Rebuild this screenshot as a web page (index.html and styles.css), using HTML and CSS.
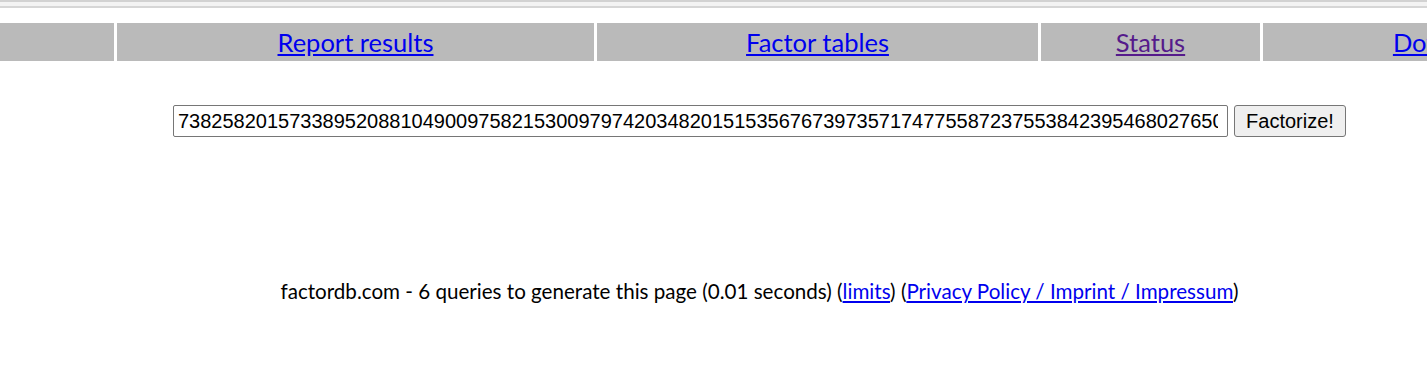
FILE: index.html
```html
<!DOCTYPE html>
<html lang="en">
    <head>
        <meta charset="UTF-8">
        <meta name="viewport" content="width=device-width, initial-scale=1.0">
        <title>factordb.com</title>
        <link rel="stylesheet" href="styles.css">
    </head>
    <body>
        <div class="page">
            <div class="topbar"></div>

            <div class="menu">
                <div class="cell cell1"></div>
                <div class="cell cell2"><a href="#">Report results</a></div>
                <div class="cell cell3"><a href="#">Factor tables</a></div>
                <div class="cell cell4"><a href="#" class="visited">Status</a></div>
                <div class="cell cell5"><a href="#">Downloads</a></div>
            </div>

            <form class="search" onsubmit="return false">
                <input type="text" class="query" name="query" value="738258201573389520881049009758215300979742034820151535676739735717477558723755384239546802765017">
                <input type="submit" class="go" value="Factorize!">
            </form>

            <p class="footer">
                factordb.com - 6 queries to generate this page (0.01 seconds)
                (<a href="#">limits</a>)
                (<a href="#">Privacy Policy / Imprint / Impressum</a>)
            </p>
        </div>
    </body>
</html>
```

FILE: styles.css
```css
html {
    overflow: hidden;
}
body {
    margin: 0;
    font-family: "Lato", "Liberation Sans", sans-serif;
    background: #fff;
}
.page {
    width: 1519px;
}
.topbar {
    height: 4px;
    border-top: 2px solid #d2d2d2;
    border-bottom: 2px solid #d6d6d6;
    background-color: #f3f3f3;
}
.menu {
    display: flex;
    gap: 3px;
    margin-top: 15px;
    width: 1700px;
}
.cell {
    height: 38px;
    background-color: #bababa;
    font-size: 25.5px;
    display: flex;
    align-items: center;
    justify-content: center;
    flex: none;
}
.cell1 { width: 114px; }
.cell2 { width: 477px; }
.cell3 { width: 441px; }
.cell4 { width: 219px; }
.cell5 { width: 386px; }

a {
    color: #0000ee;
}
a.visited {
    color: #551a8b;
}

.search {
    display: flex;
    justify-content: center;
    gap: 6px;
    margin-top: 44px;
}
.query {
    box-sizing: border-box;
    width: 1055px;
    height: 32px;
    padding: 0 9px 0 4px;
    font-family: "Liberation Sans", Arial, sans-serif;
    font-size: 20px;
    color: #000;
    border: 1px solid #767676;
    border-radius: 2px;
    margin: 0;
}
.go {
    box-sizing: border-box;
    width: 112px;
    height: 32px;
    margin: 0;
    font-family: "Liberation Sans", Arial, sans-serif;
    font-size: 20px;
    color: #000;
    background-color: #efefef;
    border: 1px solid #767676;
    border-radius: 3px;
}
.footer {
    text-align: center;
    font-size: 20.6px;
    margin: 142px 0 0;
}
```
